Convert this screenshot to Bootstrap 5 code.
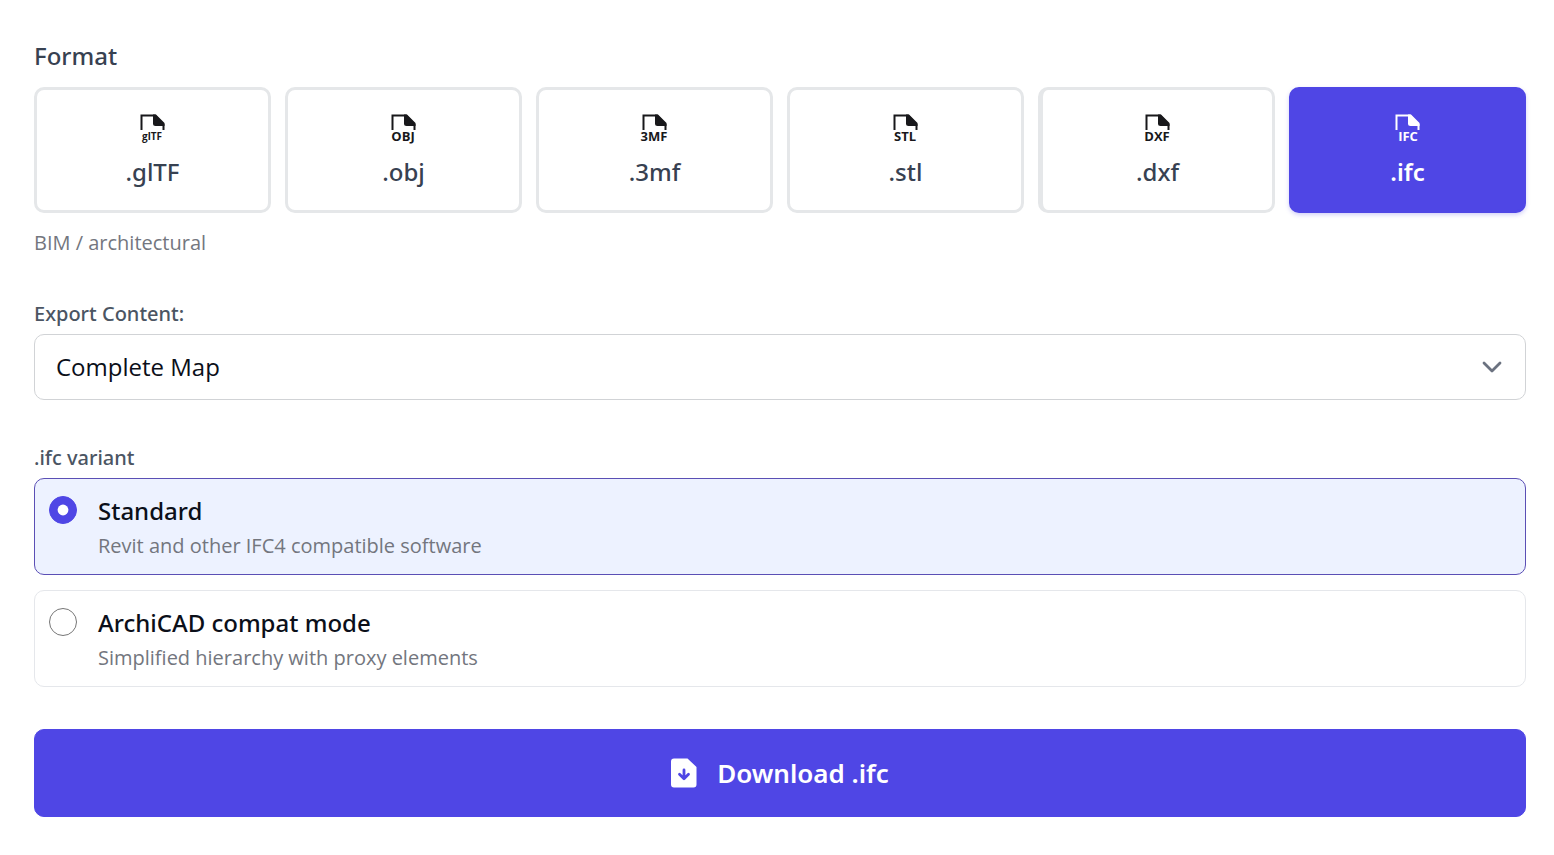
<!DOCTYPE html>
<html lang="en">
<head>
<meta charset="utf-8">
<meta name="viewport" content="width=device-width, initial-scale=1">
<title>Export</title>
<link href="https://cdn.jsdelivr.net/npm/bootstrap@5.3.0/dist/css/bootstrap.min.css" rel="stylesheet">
<style>
  :root { --accent: #4f46e5; --ink: #374151; --muted: #73767e; --text-font: "Open Sans", "Noto Sans", sans-serif; }
  body { font-family: "Noto Sans", "Open Sans", sans-serif; background: #fff; color: #0b0f19; }
  .export-form { padding: 36px 28px 36px 34px; }
  .form-title { font-size: 24px; line-height: 40px; font-weight: 500; color: var(--ink); margin: 0 0 11px; }
  .field-name { font-size: 20px; line-height: 32px; font-weight: 500; color: #4b5563; margin: 0 0 4px; }
  .hint { font-family: var(--text-font); font-size: 20px; line-height: 32px; color: var(--muted); }
  .format-grid { display: grid; grid-template-columns: repeat(6, minmax(0, 1fr)); gap: 14px; margin-bottom: 14px; }
  .format-btn { height: 126px; border: 3px solid #e5e7e9; border-radius: 10px; background: #fff; color: var(--ink); font-size: 24px; line-height: 36px; font-weight: 500; padding: 2px 0 0; }
  .format-btn svg { width: 32px; height: 32px; color: #18181b; margin-bottom: 10px; }
  .format-btn svg text { font-family: var(--text-font); font-weight: 700; text-anchor: middle; fill: currentColor; }
  .format-btn.doubled { border-left-width: 5px; }
  .format-btn.chosen { background: var(--accent); border-color: var(--accent); color: #fff; font-weight: 600; box-shadow: 0 2px 4px rgba(79,70,229,.25); }
  .format-btn.chosen svg { color: #fff; }
  .content-select { font-family: var(--text-font); height: 66px; border: 1px solid #d1d3d6; border-radius: 10px; font-size: 24px; color: #0b0f19; padding: 0 60px 0 21px;
    background-image: url("data:image/svg+xml,%3Csvg xmlns='http://www.w3.org/2000/svg' viewBox='0 0 20 12'%3E%3Cpath d='M2 2l8 8 8-8' fill='none' stroke='%236b7280' stroke-width='2.8' stroke-linecap='round' stroke-linejoin='round'/%3E%3C/svg%3E");
    background-size: 20px 12px; background-position: right 23px center; }
  .content-block { margin: 39px 0 42px; }
  .variant { min-height: 97px; border: 1px solid #e5e7eb; border-radius: 10px; padding: 13px 14px 12px; gap: 21px; cursor: pointer; }
  .variant + .variant { margin-top: 15px; }
  .variant.chosen { background: #edf2ff; border-color: #5b4fb5; }
  .variant .form-check-input { width: 28px; height: 28px; margin: 4px 0 0; border: 1px solid #767676; }
  .variant .form-check-input:checked { background-color: var(--accent); border-color: var(--accent);
    background-image: url("data:image/svg+xml,%3Csvg xmlns='http://www.w3.org/2000/svg' viewBox='0 0 28 28'%3E%3Ccircle cx='14' cy='14' r='5.8' fill='%23fff'/%3E%3C/svg%3E"); }
  .variant-name { font-size: 24px; line-height: 38px; font-weight: 500; }
  .download-btn { height: 88px; margin-top: 42px; border-radius: 10px; font-size: 26px; font-weight: 600; gap: 20px; --bs-btn-bg: var(--accent); --bs-btn-border-color: var(--accent); --bs-btn-hover-bg: #4338ca; }
</style>
</head>
<body>
<svg class="d-none" aria-hidden="true">
  <symbol id="sheet" viewBox="0 0 32 32">
    <path d="M4.500 18V3.500H18l8.500 9V18" fill="none" stroke="currentColor" stroke-width="2"/>
    <path d="M16 2.500h3L27.500 11V14H18.500Q16 14 16 11.500z" fill="currentColor"/>
  </symbol>
</svg>
<main class="container-fluid export-form">
  <h1 class="form-title" id="format-title">Format</h1>
  <div class="format-grid" role="group" aria-labelledby="format-title">
    <button type="button" class="format-btn d-flex flex-column align-items-center justify-content-center"><svg viewBox="0 0 32 32" aria-hidden="true"><use href="#sheet"/><text x="15" y="28" font-size="10">glTF</text></svg>.glTF</button>
    <button type="button" class="format-btn d-flex flex-column align-items-center justify-content-center"><svg viewBox="0 0 32 32" aria-hidden="true"><use href="#sheet"/><text x="15" y="29" font-size="13">OBJ</text></svg>.obj</button>
    <button type="button" class="format-btn d-flex flex-column align-items-center justify-content-center"><svg viewBox="0 0 32 32" aria-hidden="true"><use href="#sheet"/><text x="15" y="29" font-size="13">3MF</text></svg>.3mf</button>
    <button type="button" class="format-btn d-flex flex-column align-items-center justify-content-center"><svg viewBox="0 0 32 32" aria-hidden="true"><use href="#sheet"/><text x="15" y="29" font-size="13">STL</text></svg>.stl</button>
    <button type="button" class="format-btn doubled d-flex flex-column align-items-center justify-content-center"><svg viewBox="0 0 32 32" aria-hidden="true"><use href="#sheet"/><text x="15" y="29" font-size="13">DXF</text></svg>.dxf</button>
    <button type="button" class="format-btn chosen d-flex flex-column align-items-center justify-content-center" aria-pressed="true"><svg viewBox="0 0 32 32" aria-hidden="true"><use href="#sheet"/><text x="16" y="29" font-size="13">IFC</text></svg>.ifc</button>
  </div>
  <p class="hint mb-0">BIM / architectural</p>

  <div class="content-block">
    <label class="field-name d-block" for="content">Export Content:</label>
    <select class="form-select content-select" id="content"><option>Complete Map</option></select>
  </div>

  <div role="radiogroup" aria-labelledby="variant-title">
    <div class="field-name" id="variant-title">.ifc variant</div>
    <label class="variant chosen d-flex" for="v-standard">
      <input class="form-check-input flex-shrink-0" type="radio" name="variant" id="v-standard" checked>
      <span><span class="variant-name d-block">Standard</span><span class="hint d-block">Revit and other IFC4 compatible software</span></span>
    </label>
    <label class="variant d-flex" for="v-archicad">
      <input class="form-check-input flex-shrink-0" type="radio" name="variant" id="v-archicad">
      <span><span class="variant-name d-block">ArchiCAD compat mode</span><span class="hint d-block">Simplified hierarchy with proxy elements</span></span>
    </label>
  </div>

  <button type="button" class="btn btn-primary download-btn w-100 d-flex align-items-center justify-content-center">
    <svg width="26" height="30" viewBox="0 0 26 30" aria-hidden="true"><path d="M3 .5h13.500L25.500 9v17.500a3 3 0 0 1-3 3H3a3 3 0 0 1-3-3v-23a3 3 0 0 1 3-3z" fill="#fff"/><path d="M13 12v8M8.500 16.300L13 20.800l4.500-4.500" fill="none" stroke="#4f46e5" stroke-width="2.800" stroke-linecap="round" stroke-linejoin="round"/></svg>
    Download .ifc
  </button>
</main>
<script src="https://cdn.jsdelivr.net/npm/bootstrap@5.3.0/dist/js/bootstrap.bundle.min.js"></script>
</body>
</html>
